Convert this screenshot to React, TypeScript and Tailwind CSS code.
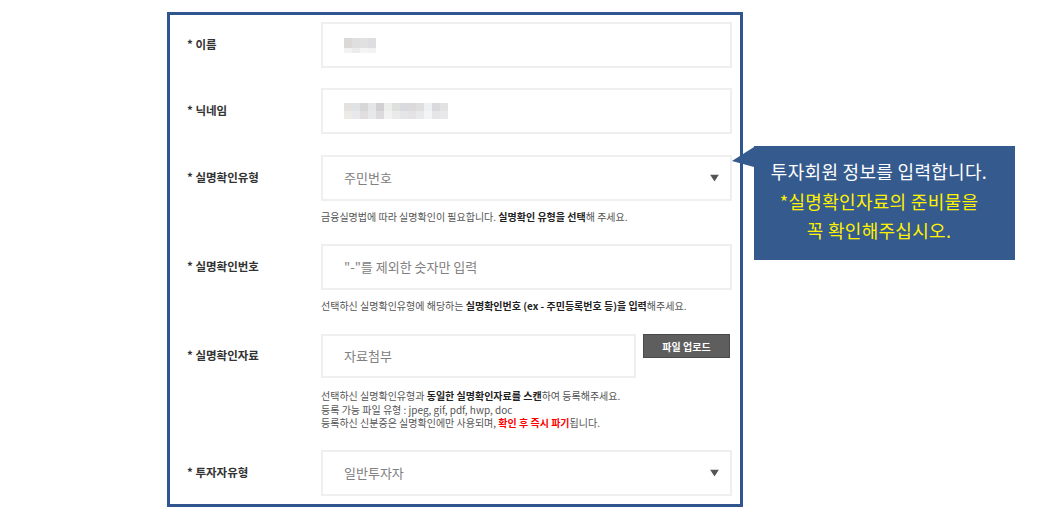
import type { ReactNode } from 'react';

const font = { fontFamily: '"Noto Sans CJK KR", "Noto Sans", sans-serif' };

function Caret() {
  return (
    <svg width="9" height="7" viewBox="0 0 9 7" className="absolute right-[11px] top-1/2 -translate-y-1/2">
      <polygon points="0,0 9,0 4.5,7" fill="#555" />
    </svg>
  );
}

function Blur({ rows, h }: { rows: string[][]; h: number[] }) {
  return (
    <div className="flex flex-col">
      {rows.map((r, i) => (
        <div key={i} className="flex">
          {r.map((c, j) => (
            <div key={j} className="w-[8px]" style={{ height: h[i], background: c }} />
          ))}
        </div>
      ))}
    </div>
  );
}

function Row({ label, top, children }: { label: string; top: string; children: ReactNode }) {
  return (
    <div className={`flex items-center ${top}`}>
      <div className="w-[151px] pl-[17px] text-[11.5px] font-bold text-[#333]">* {label}</div>
      {children}
    </div>
  );
}

function Field({ children, select }: { children?: ReactNode; select?: boolean }) {
  return (
    <div className="relative flex h-[46px] w-[411px] items-center border-2 border-[#efefef] bg-white pl-[21px] text-[13px] text-[#808080]">
      {children}
      {select && <Caret />}
    </div>
  );
}

function Help({ children, top }: { children: ReactNode; top: string }) {
  return <div className={`pl-[151px] text-[10px] leading-[16px] text-[#555] ${top}`}>{children}</div>;
}

export default function App() {
  return (
    <div className="min-h-screen bg-white" style={font}>
      <div className="flex pl-[167px] pt-[12px]">
        <div className="h-[495px] w-[576px] border-[3px] border-[#2f568f] pt-[7px]">
          <Row label="이름" top="mt-[0px]">
            <Field>
              <Blur
                h={[10, 5]}
                rows={[
                  ['#dcd8d8', '#dfdfe0', '#e1e1e2', '#dedddf'],
                  ['#f4f2f0', '#ebebeb', '#f5f5f6', '#f2f2f3'],
                ]}
              />
            </Field>
          </Row>
          <Row label="닉네임" top="mt-[20px]">
            <Field>
              <Blur
                h={[8, 8]}
                rows={[
                  ['#e3e2de', '#e1e2e6', '#d8d7d8', '#e4e6e8', '#d2cfd2', '#eceeec', '#dfdfe0', '#d9dadf', '#dbd9d9', '#e0dfe0', '#eef0f2', '#dadade', '#e3e2e2'],
                  ['#ecebe6', '#e6e8ec', '#e1dedd', '#e6e8ea', '#dcdadc', '#f1f2f1', '#eaeaea', '#e5e6e8', '#e4e2e2', '#e9e9ea', '#f3f4f5', '#e6e6e8', '#e9e8e8'],
                ]}
              />
            </Field>
          </Row>
          <Row label="실명확인유형" top="mt-[21px]">
            <Field select>주민번호</Field>
          </Row>
          <Help top="mt-[8px]">
            금융실명법에 따라 실명확인이 필요합니다. <b className="text-[#222]">실명확인 유형을 선택</b>해 주세요.
          </Help>
          <Row label="실명확인번호" top="mt-[19px]">
            <Field>"-"를 제외한 숫자만 입력</Field>
          </Row>
          <Help top="mt-[8px]">
            선택하신 실명확인유형에 해당하는 <b className="text-[#222]">실명확인번호 (ex - 주민등록번호 등)을 입력</b>해주세요.
          </Help>
          <div className="mt-[20px] flex">
            <div className="flex h-[44px] w-[151px] items-center pl-[17px] text-[11.5px] font-bold text-[#333]">* 실명확인자료</div>
            <div className="flex h-[44px] w-[315px] items-center border-2 border-[#efefef] pl-[21px] text-[13px] text-[#808080]">
              자료첨부
            </div>
            <div className="ml-[7px] flex h-[24px] w-[87px] items-center justify-center border border-[#4a4a4a] bg-[#5e5e5e] text-[10px] font-bold text-white">
              파일 업로드
            </div>
          </div>
          <div className="mt-[11px] pl-[151px] text-[10px] leading-[13.5px] text-[#555]">
            <div>
              선택하신 실명확인유형과 <b className="text-[#222]">동일한 실명확인자료를 스캔</b>하여 등록해주세요.
            </div>
            <div>등록 가능 파일 유형 : jpeg, gif, pdf, hwp, doc</div>
            <div>
              등록하신 신분증은 실명확인에만 사용되며, <b className="text-[#f00]">확인 후 즉시 파기</b>됩니다.
            </div>
          </div>
          <Row label="투자자유형" top="mt-[20px]">
            <Field select>일반투자자</Field>
          </Row>
        </div>
        <div className="relative ml-[11px] mt-[134px] h-[114px] w-[261px] bg-[#355a8d] pr-[11px] pt-[11px] text-center text-[18px] leading-[29.5px] tracking-[0.3px]">
          <svg width="22" height="21" viewBox="0 0 22 21" className="absolute left-[-22px] top-[1px]">
            <polygon points="22,0 0,14 22,20" fill="#355a8d" />
          </svg>
          <div className="text-white">투자회원 정보를 입력합니다.</div>
          <div className="text-[#fff200]">*실명확인자료의 준비물을</div>
          <div className="text-[#fff200]">꼭 확인해주십시오.</div>
        </div>
      </div>
    </div>
  );
}
